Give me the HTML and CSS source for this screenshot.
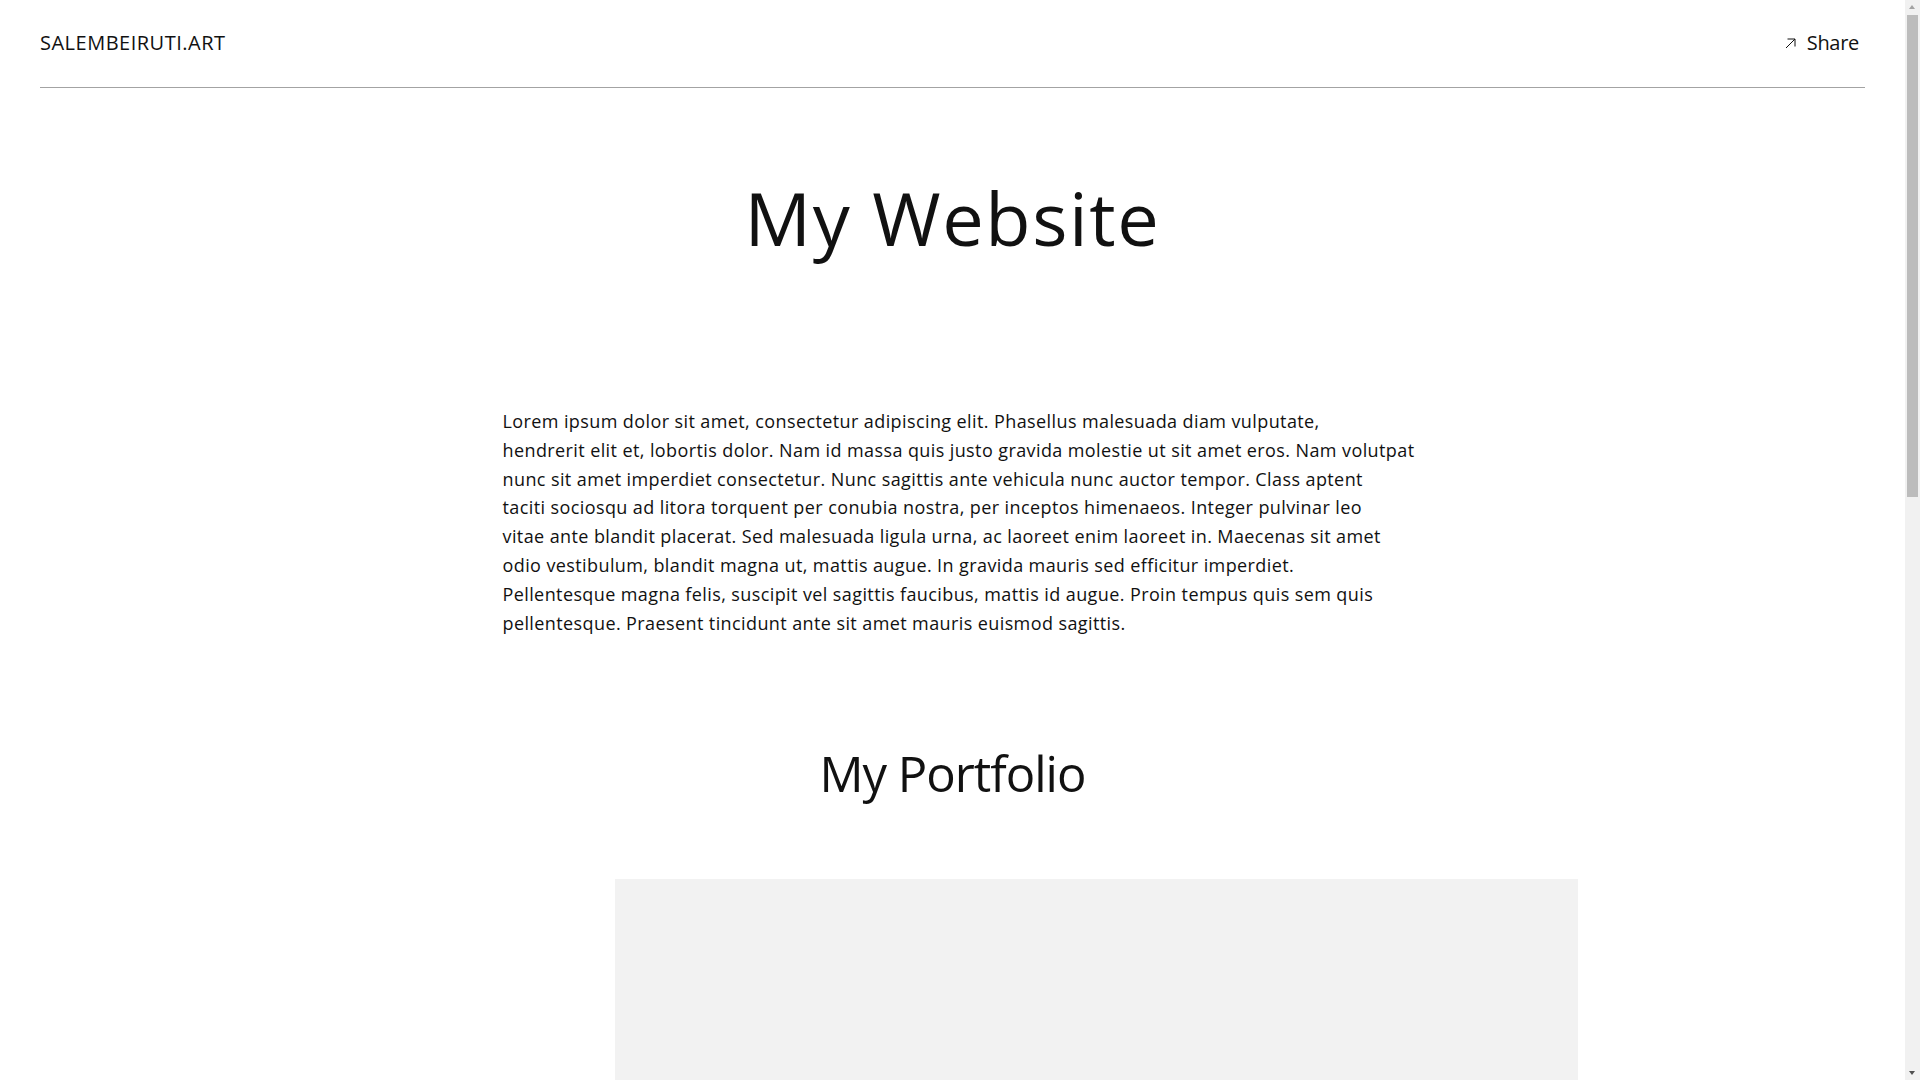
FILE: index.html
```html
<!DOCTYPE html>
<html lang="en">
<head>
    <meta charset="UTF-8">
    <meta name="viewport" content="width=device-width, initial-scale=1.0">
    <title>My Website</title>
    <link rel="stylesheet" href="styles.css">
</head>
<body>
    <header class="site-header">
        <a class="brand" href="#">SALEMBEIRUTI.ART</a>
        <button class="share-btn" type="button">
            <svg class="share-icon" width="11" height="11" viewBox="0 0 11 11" aria-hidden="true">
                <path d="M1 10 L10 1 M2.5 1 H10 V8.5" fill="none" stroke="#111" stroke-width="1"/>
            </svg>
            <span>Share</span>
        </button>
    </header>

    <main>
        <section class="hero">
            <h1>My Website</h1>
        </section>

        <section class="about">
            <p>Lorem ipsum dolor sit amet, consectetur adipiscing elit. Phasellus malesuada diam vulputate,<br>
            hendrerit elit et, lobortis dolor. Nam id massa quis justo gravida molestie ut sit amet eros. Nam volutpat<br>
            nunc sit amet imperdiet consectetur. Nunc sagittis ante vehicula nunc auctor tempor. Class aptent<br>
            taciti sociosqu ad litora torquent per conubia nostra, per inceptos himenaeos. Integer pulvinar leo<br>
            vitae ante blandit placerat. Sed malesuada ligula urna, ac laoreet enim laoreet in. Maecenas sit amet<br>
            odio vestibulum, blandit magna ut, mattis augue. In gravida mauris sed efficitur imperdiet.<br>
            Pellentesque magna felis, suscipit vel sagittis faucibus, mattis id augue. Proin tempus quis sem quis<br>
            pellentesque. Praesent tincidunt ante sit amet mauris euismod sagittis.</p>
        </section>

        <section class="portfolio">
            <h2>My Portfolio</h2>
            <div class="gallery">
                <div class="gallery-item"></div>
            </div>
        </section>
    </main>

    <!-- window scrollbar, drawn since the browser hides its own -->
    <div class="scrollbar" aria-hidden="true">
        <span class="scroll-arrow up"></span>
        <span class="scroll-thumb"></span>
        <span class="scroll-arrow down"></span>
    </div>
</body>
</html>
```

FILE: styles.css
```css
body {
    font-family: "Open Sans", "Noto Sans", sans-serif;
    color: #111;
    background: #fff;
    margin: 0;
    padding: 0 55px 0 40px;
}
.site-header {
    display: flex;
    justify-content: space-between;
    align-items: center;
    padding: 29px 0 30px;
    border-bottom: 1px solid #a3a3a3;
}
.brand {
    font-size: 20px;
    line-height: 28px;
    letter-spacing: 0.5px;
    color: #111;
    text-decoration: none;
}
.share-btn {
    display: flex;
    align-items: center;
    gap: 11px;
    padding: 0 6px 0 0;
    border: none;
    background: none;
    font-family: inherit;
    font-size: 20px;
    line-height: 28px;
    letter-spacing: -0.3px;
    color: #111;
    cursor: pointer;
}
.hero h1 {
    margin: 0;
    padding-top: 85px;
    font-size: 74px;
    font-weight: 400;
    line-height: 90px;
    letter-spacing: 1.6px;
    text-align: center;
}
.about {
    max-width: 900px;
    margin: 0 auto;
    padding-top: 144px;
}
.about p {
    margin: 0;
    font-size: 18px;
    line-height: 28.8px;
    letter-spacing: 0.4px;
    white-space: nowrap;
}
.portfolio h2 {
    margin: 0;
    padding-top: 104px;
    font-size: 49px;
    font-weight: 400;
    line-height: 64px;
    letter-spacing: -1px;
    text-align: center;
}
.gallery {
    max-width: 1250px;
    margin: 74px auto 0;
    display: flex;
    justify-content: flex-end;
    padding-bottom: 370px;
}
.gallery-item {
    width: 963px;
    height: 1100px;
    background: #f2f2f2;
}
.scrollbar {
    position: fixed;
    top: 0;
    right: 0;
    width: 15px;
    height: 100vh;
    background: #f1f1f1;
}
.scroll-thumb {
    position: absolute;
    top: 15px;
    left: 2px;
    width: 11px;
    height: 482px;
    background: #bcbcbc;
}
.scroll-arrow {
    position: absolute;
    left: 4px;
    width: 0;
    height: 0;
    border-left: 3.5px solid transparent;
    border-right: 3.5px solid transparent;
}
.scroll-arrow.up {
    top: 5px;
    border-bottom: 4px solid #a3a3a3;
}
.scroll-arrow.down {
    bottom: 5px;
    border-top: 4px solid #505050;
}
```
